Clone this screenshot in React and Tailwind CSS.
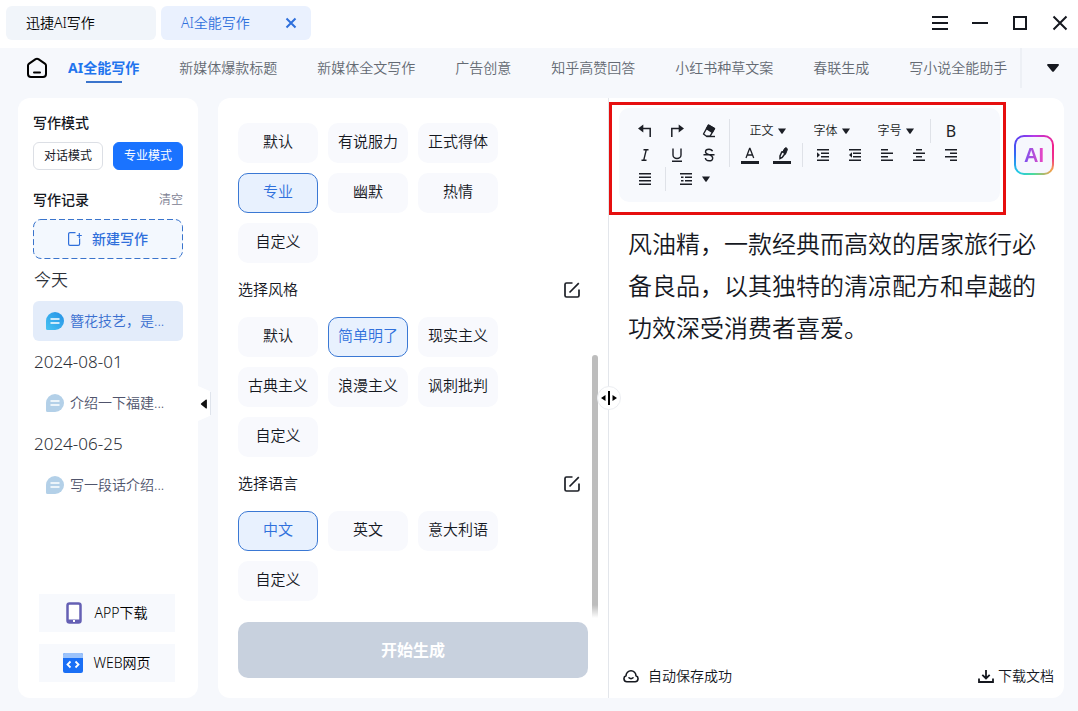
import { useState } from 'react'

const navItems = [
  '新媒体爆款标题',
  '新媒体全文写作',
  '广告创意',
  '知乎高赞回答',
  '小红书种草文案',
  '春联生成',
  '写小说全能助手',
]

const tones = ['默认', '有说服力', '正式得体', '专业', '幽默', '热情', '自定义']
const styles = ['默认', '简单明了', '现实主义', '古典主义', '浪漫主义', '讽刺批判', '自定义']
const languages = ['中文', '英文', '意大利语', '自定义']

const history = [
  { date: '今天', title: '簪花技艺，是...', active: true },
  { date: '2024-08-01', title: '介绍一下福建...' },
  { date: '2024-06-25', title: '写一段话介绍...' },
]

const article =
  '风油精，一款经典而高效的居家旅行必备良品，以其独特的清凉配方和卓越的功效深受消费者喜爱。'

function Caret() {
  return (
    <svg className="h-[6px] w-2 shrink-0" viewBox="0 0 8 6" fill="currentColor">
      <path d="M0 .5h8L4.600 5.400a.8.8 0 0 1-1.200 0z" />
    </svg>
  )
}

function TitleBar() {
  return (
    <header className="flex items-center justify-between bg-white pt-[6px] pr-[10px] pb-2 pl-[6px]">
      <div className="flex gap-[5px]">
        <button type="button" className="h-[34px] w-[150px] rounded-md bg-[#f1f5fa] pl-5 text-left text-sm text-black">
          迅捷AI写作
        </button>
        <div className="flex h-[34px] w-[150px] items-center justify-between rounded-md bg-[#eaf1fe] pr-[14px] pl-5 text-[#2f70dc]">
          <button type="button" className="text-sm">AI全能写作</button>
          <button type="button" aria-label="关闭标签">
            <svg className="size-3" viewBox="0 0 12 12" stroke="currentColor" strokeWidth="2" fill="none">
              <path d="M1.500 1.500l9 9M10.500 1.500l-9 9" />
            </svg>
          </button>
        </div>
      </div>
      <div className="flex gap-6 text-[#15181f]">
        <button type="button" aria-label="菜单">
          <svg className="size-4" viewBox="0 0 16 16" fill="currentColor">
            <path d="M0 1h16v2H0zM0 7h16v2H0zM0 13h16v2H0z" />
          </svg>
        </button>
        <button type="button" aria-label="最小化">
          <svg className="size-4" viewBox="0 0 16 16" fill="currentColor">
            <path d="M0 7h16v2H0z" />
          </svg>
        </button>
        <button type="button" aria-label="最大化">
          <svg className="size-4" viewBox="0 0 16 16" fill="none" stroke="currentColor" strokeWidth="2">
            <path d="M2 2h12v12H2z" />
          </svg>
        </button>
        <button type="button" aria-label="关闭">
          <svg className="size-4" viewBox="0 0 16 16" fill="none" stroke="currentColor" strokeWidth="2">
            <path d="M1.500 1.500l13 13M14.500 1.500l-13 13" />
          </svg>
        </button>
      </div>
    </header>
  )
}

function Navbar() {
  return (
    <nav className="flex h-10 items-center pl-[26px]">
      <a href="#home" aria-label="首页" className="mr-5 shrink-0 text-black">
        <svg className="size-[22px]" viewBox="0 0 22 22" fill="none" stroke="currentColor" strokeWidth="2" strokeLinejoin="round" strokeLinecap="round">
          <path d="M2 8.600c0-.9.400-1.500 1.100-2L9.600 2.200c.9-.6 1.900-.6 2.800 0l6.500 4.400c.7.500 1.100 1.100 1.100 2V17a3 3 0 0 1-3 3H5a3 3 0 0 1-3-3zM8 15.500h6" />
        </svg>
      </a>
      <div className="flex h-full min-w-0 flex-1 items-center gap-10 overflow-hidden text-sm whitespace-nowrap text-[#646a73]">
        <a href="#write" aria-current="page" className="flex shrink-0 flex-col items-center pt-1 font-bold text-[#1f74ee]">
          AI全能写作
          <span className="mt-[3px] h-[2px] w-9 bg-[#3a74cc]" />
        </a>
        {navItems.map((item) => (
          <a href="#write" key={item} className="shrink-0">
            {item}
          </a>
        ))}
      </div>
      <button
        type="button"
        aria-label="更多"
        className="grid h-full w-[58px] shrink-0 place-items-center border-l-2 border-[#edf0f5] pl-[6px] text-[#15181f]"
      >
        <svg className="h-2 w-3" viewBox="0 0 12 8" fill="currentColor">
          <path d="M1 0h10c.8 0 1.200.9.700 1.500L7 7.200c-.5.7-1.500.7-2 0L.3 1.500C-.2.900.200 0 1 0z" />
        </svg>
      </button>
    </nav>
  )
}

function ChatIcon({ active }) {
  return (
    <svg className="size-[18px] shrink-0" viewBox="0 0 18 18">
      <defs>
        <linearGradient id="chat-active" x1="0" y1="1" x2="1" y2="0">
          <stop offset="0" stopColor="#47c3f2" />
          <stop offset="1" stopColor="#2490e6" />
        </linearGradient>
      </defs>
      <path d="M9 0a9 9 0 1 1 0 18H1.500A1.500 1.500 0 0 1 0 16.500V9a9 9 0 0 1 9-9z" fill={active ? 'url(#chat-active)' : '#b3d0e8'} />
      <path d="M4.500 7h9M4.500 11h9" stroke="#fff" strokeWidth="1.500" />
    </svg>
  )
}

function Sidebar() {
  const [mode, setMode] = useState('专业模式')

  return (
    <aside className="relative flex w-[180px] shrink-0 flex-col rounded-xl bg-white px-[15px] pt-[15px] pb-4">
      <h2 className="text-sm leading-5 font-medium text-[#15181f]">写作模式</h2>
      <div className="mt-[9px] flex gap-[10px]">
        {['对话模式', '专业模式'].map((item) => (
          <button
            type="button"
            key={item}
            onClick={() => setMode(item)}
            className={`h-7 flex-1 rounded-md border text-xs font-normal ${
              mode === item
                ? 'border-[#1a73ff] bg-[#1a73ff] text-white'
                : 'border-[#dcdfe5] bg-white text-[#15181f]'
            }`}
          >
            {item}
          </button>
        ))}
      </div>
      <div className="mt-5 flex items-center justify-between">
        <h2 className="text-sm leading-5 font-medium text-[#15181f]">写作记录</h2>
        <button type="button" className="text-xs leading-5 text-[#7c8092]">清空</button>
      </div>
      <button
        type="button"
        className="relative mt-[9px] flex h-10 items-center justify-center gap-[10px] rounded-lg bg-[#f3f8fe] text-sm font-medium text-[#2f6fdb]"
      >
        <svg className="absolute inset-0 size-full" fill="none" stroke="#3a74cc">
          <rect x="0.500" y="0.500" width="149" height="39" rx="7.500" strokeDasharray="6 3" />
        </svg>
        <svg className="size-[14px]" viewBox="0 0 14 14" fill="none" stroke="currentColor" strokeWidth="1.200">
          <path d="M7.500.6H2A1.400 1.400 0 0 0 .6 2v10A1.400 1.400 0 0 0 2 13.400h8.200a1.400 1.400 0 0 0 1.400-1.400V6.500M11.300 1v5M8.800 3.500h5" />
        </svg>
        新建写作
      </button>
      {history.map((item) => (
        <section key={item.date}>
          <h3 className="pl-px text-[17px] leading-[42px] text-[#2c3038]">{item.date}</h3>
          <button
            type="button"
            className={`flex h-10 w-full items-center gap-[6px] rounded-md pl-[13px] text-sm whitespace-nowrap ${
              item.active ? 'bg-[#e3ecfa] text-[#3a6fd0]' : 'text-[#50546c]'
            }`}
          >
            <ChatIcon active={item.active} />
            {item.title}
          </button>
        </section>
      ))}
      <div className="mt-auto flex flex-col gap-3 pr-2 pl-[6px] text-sm text-black">
        <button type="button" className="flex h-[38px] items-center justify-center gap-3 bg-[#f7f9fd]">
          <svg className="h-[22px] w-4" viewBox="0 0 16 22">
            <rect x="1.500" y="1.500" width="13" height="19" rx="2" fill="#fff" stroke="#6560b4" strokeWidth="2.500" />
            <path d="M2 17.500h12V20H2z" fill="#6560b4" />
            <path d="M7 18h2v2H7z" fill="#fff" />
          </svg>
          APP下载
        </button>
        <button type="button" className="flex h-[38px] items-center justify-center gap-[10px] bg-[#f7f9fd]">
          <svg className="size-5" viewBox="0 0 20 20">
            <rect width="20" height="20" rx="2" fill="#1a6ff5" />
            <path d="M0 5V2a2 2 0 0 1 2-2h16a2 2 0 0 1 2 2v3z" fill="#9cc3fb" />
            <path d="M7.500 8.500l-3 3 3 3M12.500 8.500l3 3-3 3" fill="none" stroke="#fff" strokeWidth="1.800" />
          </svg>
          WEB网页
        </button>
      </div>
      <button type="button" aria-label="收起侧栏" className="absolute top-[288px] -right-[13px]">
        <svg className="h-[35px] w-[13px]" viewBox="0 0 13 35">
          <path d="M0 0l10.500 4.500a2.500 2.500 0 0 1 2 2.500v21a2.500 2.500 0 0 1-2 2.500L0 35z" fill="#fff" />
          <path d="M12.500 6v23" stroke="#dfe4ec" />
          <path d="M3.300 17.200L8 13.600c.4-.3.900 0 .9.500v7.800c0 .5-.5.800-.9.500l-4.700-3.600a1 1 0 0 1 0-1.600z" fill="#111" />
        </svg>
      </button>
    </aside>
  )
}

function Chips({ items, initial }) {
  const [selected, setSelected] = useState(initial)

  return (
    <div className="flex flex-wrap gap-[10px]">
      {items.map((item) => (
        <button
          type="button"
          key={item}
          onClick={() => setSelected(item)}
          className={`h-10 w-20 rounded-[10px] border pb-[3px] text-[15px] ${
            selected === item
              ? 'border-[#3a78d4] bg-[#e8f1fe] text-[#2f70dc]'
              : 'border-transparent bg-[#f8f9fd] text-[#15181f]'
          }`}
        >
          {item}
        </button>
      ))}
    </div>
  )
}

function SectionTitle({ children }) {
  return (
    <div className="flex h-[54px] items-center justify-between">
      <h2 className="pb-[2px] text-[15px] leading-6 text-[#15181f]">{children}</h2>
      <button type="button" aria-label="编辑" className="text-[#1c1f26]">
        <svg className="size-4" viewBox="0 0 16 16" fill="none" stroke="currentColor" strokeWidth="1.700">
          <path d="M8.500 1H2.500A1.500 1.500 0 0 0 1 2.500v11A1.500 1.500 0 0 0 2.500 15h11a1.500 1.500 0 0 0 1.500-1.500V7.500M5.500 10.500L14.800 1.200" />
        </svg>
      </button>
    </div>
  )
}

function Options() {
  return (
    <section className="flex w-[390px] shrink-0 flex-col pb-5">
      <div className="flex flex-1 gap-3 pr-[10px] pl-5">
        <div className="flex-1 pt-[25px] pb-4">
          <Chips items={tones} initial="专业" />
          <SectionTitle>选择风格</SectionTitle>
          <Chips items={styles} initial="简单明了" />
          <SectionTitle>选择语言</SectionTitle>
          <Chips items={languages} initial="中文" />
        </div>
        <div className="h-[263px] w-[6px] self-end rounded-t-full bg-linear-to-b from-[#bdbdbd] from-95% to-white" />
      </div>
      <button type="button" className="mx-5 mt-1 h-14 rounded-[10px] bg-[#c8d1de] text-base font-bold text-white">
        开始生成
      </button>
    </section>
  )
}

function Tool({ label, children }) {
  return (
    <button type="button" aria-label={label} className="grid h-6 w-8 place-items-center">
      {children}
    </button>
  )
}

function Glyph({ d }) {
  return (
    <svg className="size-[14px]" viewBox="0 0 14 14" fill="none" stroke="currentColor" strokeWidth="1.400">
      <path d={d} />
    </svg>
  )
}

// Stack of text lines; each entry is [x, width]
function Lines({ rows, marker }) {
  return (
    <svg className="h-[14px] w-3" viewBox="0 0 12 14" fill="currentColor">
      {rows.map(([x, width], i) => (
        <rect key={i} x={x} y={1 + (i * 10.500) / (rows.length - 1)} width={width} height="1.500" />
      ))}
      {marker && <path d={marker} />}
    </svg>
  )
}

function Divider() {
  return <span className="mx-1 h-6 w-px bg-[#dfe2e8]" />
}

function ToolSelect({ label }) {
  return (
    <label className="flex h-6 w-16 items-center justify-center gap-1 pl-[3px]">
      <select aria-label={label} className="w-6 appearance-none bg-transparent text-xs">
        <option>{label}</option>
      </select>
      <Caret />
    </label>
  )
}

function Toolbar() {
  return (
    <div className="flex flex-wrap rounded-[10px] bg-[#f7f9fd] px-[10px] py-[11px] text-[#1c1f26]">
      <Tool label="撤销">
        <svg className="size-[14px]" viewBox="0 0 14 14">
          <path d="M0 4.500L5.300.5v8z" fill="currentColor" />
          <path d="M5 4.500h7.200v8.500" fill="none" stroke="currentColor" strokeWidth="1.500" />
        </svg>
      </Tool>
      <Tool label="重做">
        <svg className="size-[14px]" viewBox="0 0 14 14">
          <path d="M14 4.500L8.700.5v8z" fill="currentColor" />
          <path d="M9 4.500H1.800v8.500" fill="none" stroke="currentColor" strokeWidth="1.500" />
        </svg>
      </Tool>
      <Tool label="清除格式">
        <svg className="size-[14px]" viewBox="0 0 14 14" fill="none" stroke="currentColor" strokeWidth="1.400" strokeLinejoin="round">
          <path d="M6.500 1.200L12.500 4.500 8 12.300H4.500L1.500 10z" />
          <path d="M6.500 1.200L12.500 4.500 10.300 8.300 4.500 4.700z" fill="currentColor" />
          <path d="M4.500 12.500h8.500" />
        </svg>
      </Tool>
      <Divider />
      <ToolSelect label="正文" />
      <ToolSelect label="字体" />
      <ToolSelect label="字号" />
      <Divider />
      <Tool label="加粗"><span className="text-base leading-6 font-normal">B</span></Tool>
      <Tool label="斜体">
        <Glyph d="M5.500 1.700h5M3.500 12.300h5M8.300 1.700L5.700 12.300" />
      </Tool>
      <Tool label="下划线">
        <Glyph d="M3 .5v6.500a4 3.500 0 0 0 8 0V.5M2 13.300h10" />
      </Tool>
      <Tool label="删除线">
        <Glyph d="M10.500 3.300C10 1.700 8.500 1.200 7 1.200c-2 0-3.500 1-3.500 2.700C3.500 7 10.700 6.300 10.700 9.900c0 1.900-1.600 2.900-3.600 2.900s-3.500-1-3.800-2.800M1.500 6.800h11" />
      </Tool>
      <Divider />
      <Tool label="字体颜色">
        <svg className="h-[17px] w-[18px]" viewBox="0 0 18 17" fill="none" stroke="currentColor">
          <path d="M5 11L8.600 1.500h.4L12.700 11M6.200 8h5.200" strokeWidth="1.300" />
          <path d="M0 15.500h18" strokeWidth="3" />
        </svg>
      </Tool>
      <Tool label="背景颜色">
        <svg className="h-[17px] w-[18px]" viewBox="0 0 18 17" fill="none" stroke="currentColor">
          <path d="M9 4.500L7 9v2.500l2.200-1 3.300-4.500" strokeWidth="1.500" />
          <path d="M8.800 4.800l1.200-.3 1.500-3c1-1.500 3.300-.5 2.800 1.300L13 6l-.5 1.200z" fill="currentColor" />
          <path d="M0 15.500h18" strokeWidth="3" />
        </svg>
      </Tool>
      <Divider />
      <Tool label="增加缩进">
        <Lines rows={[[0, 12], [4, 8], [4, 8], [0, 12]]} marker="M0 4.200v5.600l3-2.800z" />
      </Tool>
      <Tool label="减少缩进">
        <Lines rows={[[0, 12], [4, 8], [4, 8], [0, 12]]} marker="M3 4.200v5.600L0 7z" />
      </Tool>
      <Tool label="左对齐"><Lines rows={[[0, 7], [0, 12], [0, 7], [0, 12]]} /></Tool>
      <Tool label="居中"><Lines rows={[[3, 6], [0, 12], [3, 6], [0, 12]]} /></Tool>
      <Tool label="右对齐"><Lines rows={[[0, 12], [5, 7], [0, 12], [5, 7]]} /></Tool>
      <Tool label="两端对齐"><Lines rows={[[0, 12], [0, 12], [0, 12], [0, 12]]} /></Tool>
      <Divider />
      <button type="button" aria-label="行高" className="flex h-6 items-center gap-[10px] pl-[10px]">
        <Lines rows={[[0, 12], [5, 7], [5, 7], [0, 12]]} marker="M1 4.500h2.500V6H1zM1 8h2.500v1.500H1z" />
        <Caret />
      </button>
    </div>
  )
}

function Editor() {
  const [text, setText] = useState(article)

  return (
    <section className="relative flex min-w-0 flex-1 flex-col border-l border-[#e3e6eb]">
      <div className="flex items-start gap-2 pt-1 pr-[10px]">
        <div className="flex-1 border-3 border-[#e60f0f] pt-[3px] pr-[3px] pb-[10px] pl-[7px]">
          <Toolbar />
        </div>
        <button
          type="button"
          aria-label="AI"
          className="mt-[33px] size-10 shrink-0 rounded-[10px] bg-[conic-gradient(#b63ce8,#f0208c_60deg,#f0308c_100deg,#f5a04a_130deg,#4fdc9a_180deg,#1fc8e8_225deg,#2f6cf5_270deg,#5a3cf0_315deg,#b63ce8)] p-[2px]"
        >
          <span className="grid size-full place-items-center rounded-lg bg-[#f6f7fd]">
            <span className="bg-linear-to-r from-[#7b4df0] to-[#ee3fc0] bg-clip-text font-['Liberation_Sans',sans-serif] text-xl leading-6 font-bold text-transparent">
              AI
            </span>
          </span>
        </button>
      </div>
      <textarea
        aria-label="文档内容"
        value={text}
        onChange={(event) => setText(event.target.value)}
        className="mt-2 w-full flex-1 resize-none pr-4 pl-[19px] text-2xl leading-[42px] text-[#15181f] outline-none"
      />
      <footer className="flex items-center justify-between pt-3 pr-[10px] pb-3 pl-[14px] text-sm leading-5 text-[#15181f]">
        <span className="flex items-center gap-[9px]">
          <svg className="size-4" viewBox="0 0 16 16" fill="none" stroke="currentColor" strokeWidth="1.600" strokeLinecap="round">
            <path d="M3.900 13.800h8.200a3.100 3.100 0 0 0 .9-6A5 5 0 0 0 3 7.800a3.100 3.100 0 0 0 .9 6zM6 9.800c1.100 1.100 2.900 1.100 4 0" />
          </svg>
          自动保存成功
        </span>
        <button type="button" className="flex items-center gap-1">
          <svg className="size-4" viewBox="0 0 16 16" fill="none" stroke="currentColor" strokeWidth="1.800">
            <path d="M8 2v8M4.300 6.800L8 10.500l3.700-3.700M1 10.500V14h14v-3.500" />
          </svg>
          下载文档
        </button>
      </footer>
      <button
        type="button"
        aria-label="调整宽度"
        className="absolute top-[288px] -left-3 grid size-6 place-items-center rounded-full border border-[#eceef2] bg-white text-black"
      >
        <svg className="h-[14px] w-4" viewBox="0 0 16 14" fill="currentColor">
          <path d="M7 0h2v14H7zM0 7l4.500-3v6zM16 7l-4.500-3v6z" />
        </svg>
      </button>
    </section>
  )
}

function App() {
  return (
    <div className="flex min-h-screen flex-col bg-[#f6f8fc] font-['Noto_Sans','Noto_Sans_CJK_SC',sans-serif] font-[350]">
      <TitleBar />
      <Navbar />
      <main className="flex flex-1 gap-5 pt-[10px] pr-[14px] pb-[13px] pl-[18px]">
        <Sidebar />
        <div className="flex min-w-0 flex-1 rounded-xl bg-white">
          <Options />
          <Editor />
        </div>
      </main>
    </div>
  )
}

export default App
